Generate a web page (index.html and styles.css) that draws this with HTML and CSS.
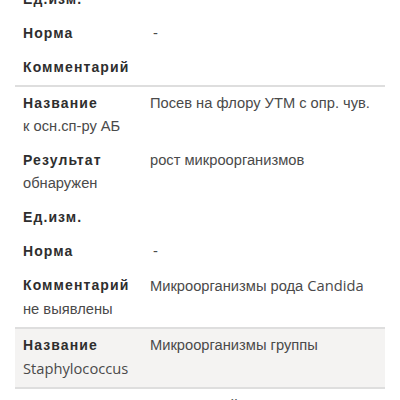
FILE: index.html
```html
<!DOCTYPE html>
<html lang="ru">
<head>
    <meta charset="UTF-8">
    <meta name="viewport" content="width=device-width, initial-scale=1.0">
    <title>Результаты анализа</title>
    <link rel="stylesheet" href="styles.css">
</head>
<body>
    <div class="list">
        <div class="item">
            <div class="field"><span class="label">Ед.изм.</span></div>
            <div class="field"><span class="label">Норма</span><span class="dash">-</span></div>
            <div class="field"><span class="label">Комментарий</span></div>
        </div>

        <div class="item">
            <div class="field"><span class="label">Название</span>Посев на флору УТМ с опр. чув. к осн.сп-ру АБ</div>
            <div class="field"><span class="label">Результат</span>рост микроорганизмов обнаружен</div>
            <div class="field"><span class="label">Ед.изм.</span></div>
            <div class="field"><span class="label">Норма</span><span class="dash">-</span></div>
            <div class="field"><span class="label">Комментарий</span>Микроорганизмы рода <span class="lat">Candida</span> не выявлены</div>
        </div>

        <div class="item shaded">
            <div class="field"><span class="label">Название</span>Микроорганизмы группы <span class="lat">Staphylococcus</span></div>
        </div>

        <div class="item">
            <div class="field"><span class="label">Название</span>Выделенный микроорганизм № 1</div>
            <div class="field"><span class="label">Результат</span></div>
        </div>
    </div>
</body>
</html>
```

FILE: styles.css
```css
* {
    margin: 0;
    padding: 0;
    box-sizing: border-box;
}

body {
    background-color: #fff;
    color: #4a4a4a;
    font-family: "Liberation Sans", Arial, sans-serif;
    font-size: 14.7px;
    line-height: 23px;
}

.list {
    margin-top: -17px;
    padding: 0 15px;
}

.item {
    padding: 5px 8px 6px;
    border-bottom: 2px solid #dedede;
}

.item.shaded {
    background-color: #f4f3f2;
}

.field {
    display: flow-root;
    margin-bottom: 11px;
}

.field:last-child {
    margin-bottom: 0;
}

.label {
    float: left;
    width: 127px;
    color: #2e2e2e;
    font-weight: bold;
    font-size: 14px;
    letter-spacing: 1.1px;
}

.dash {
    padding-left: 3px;
}

.lat {
    font-family: "Open Sans", sans-serif;
    font-size: 14.7px;
}
```
